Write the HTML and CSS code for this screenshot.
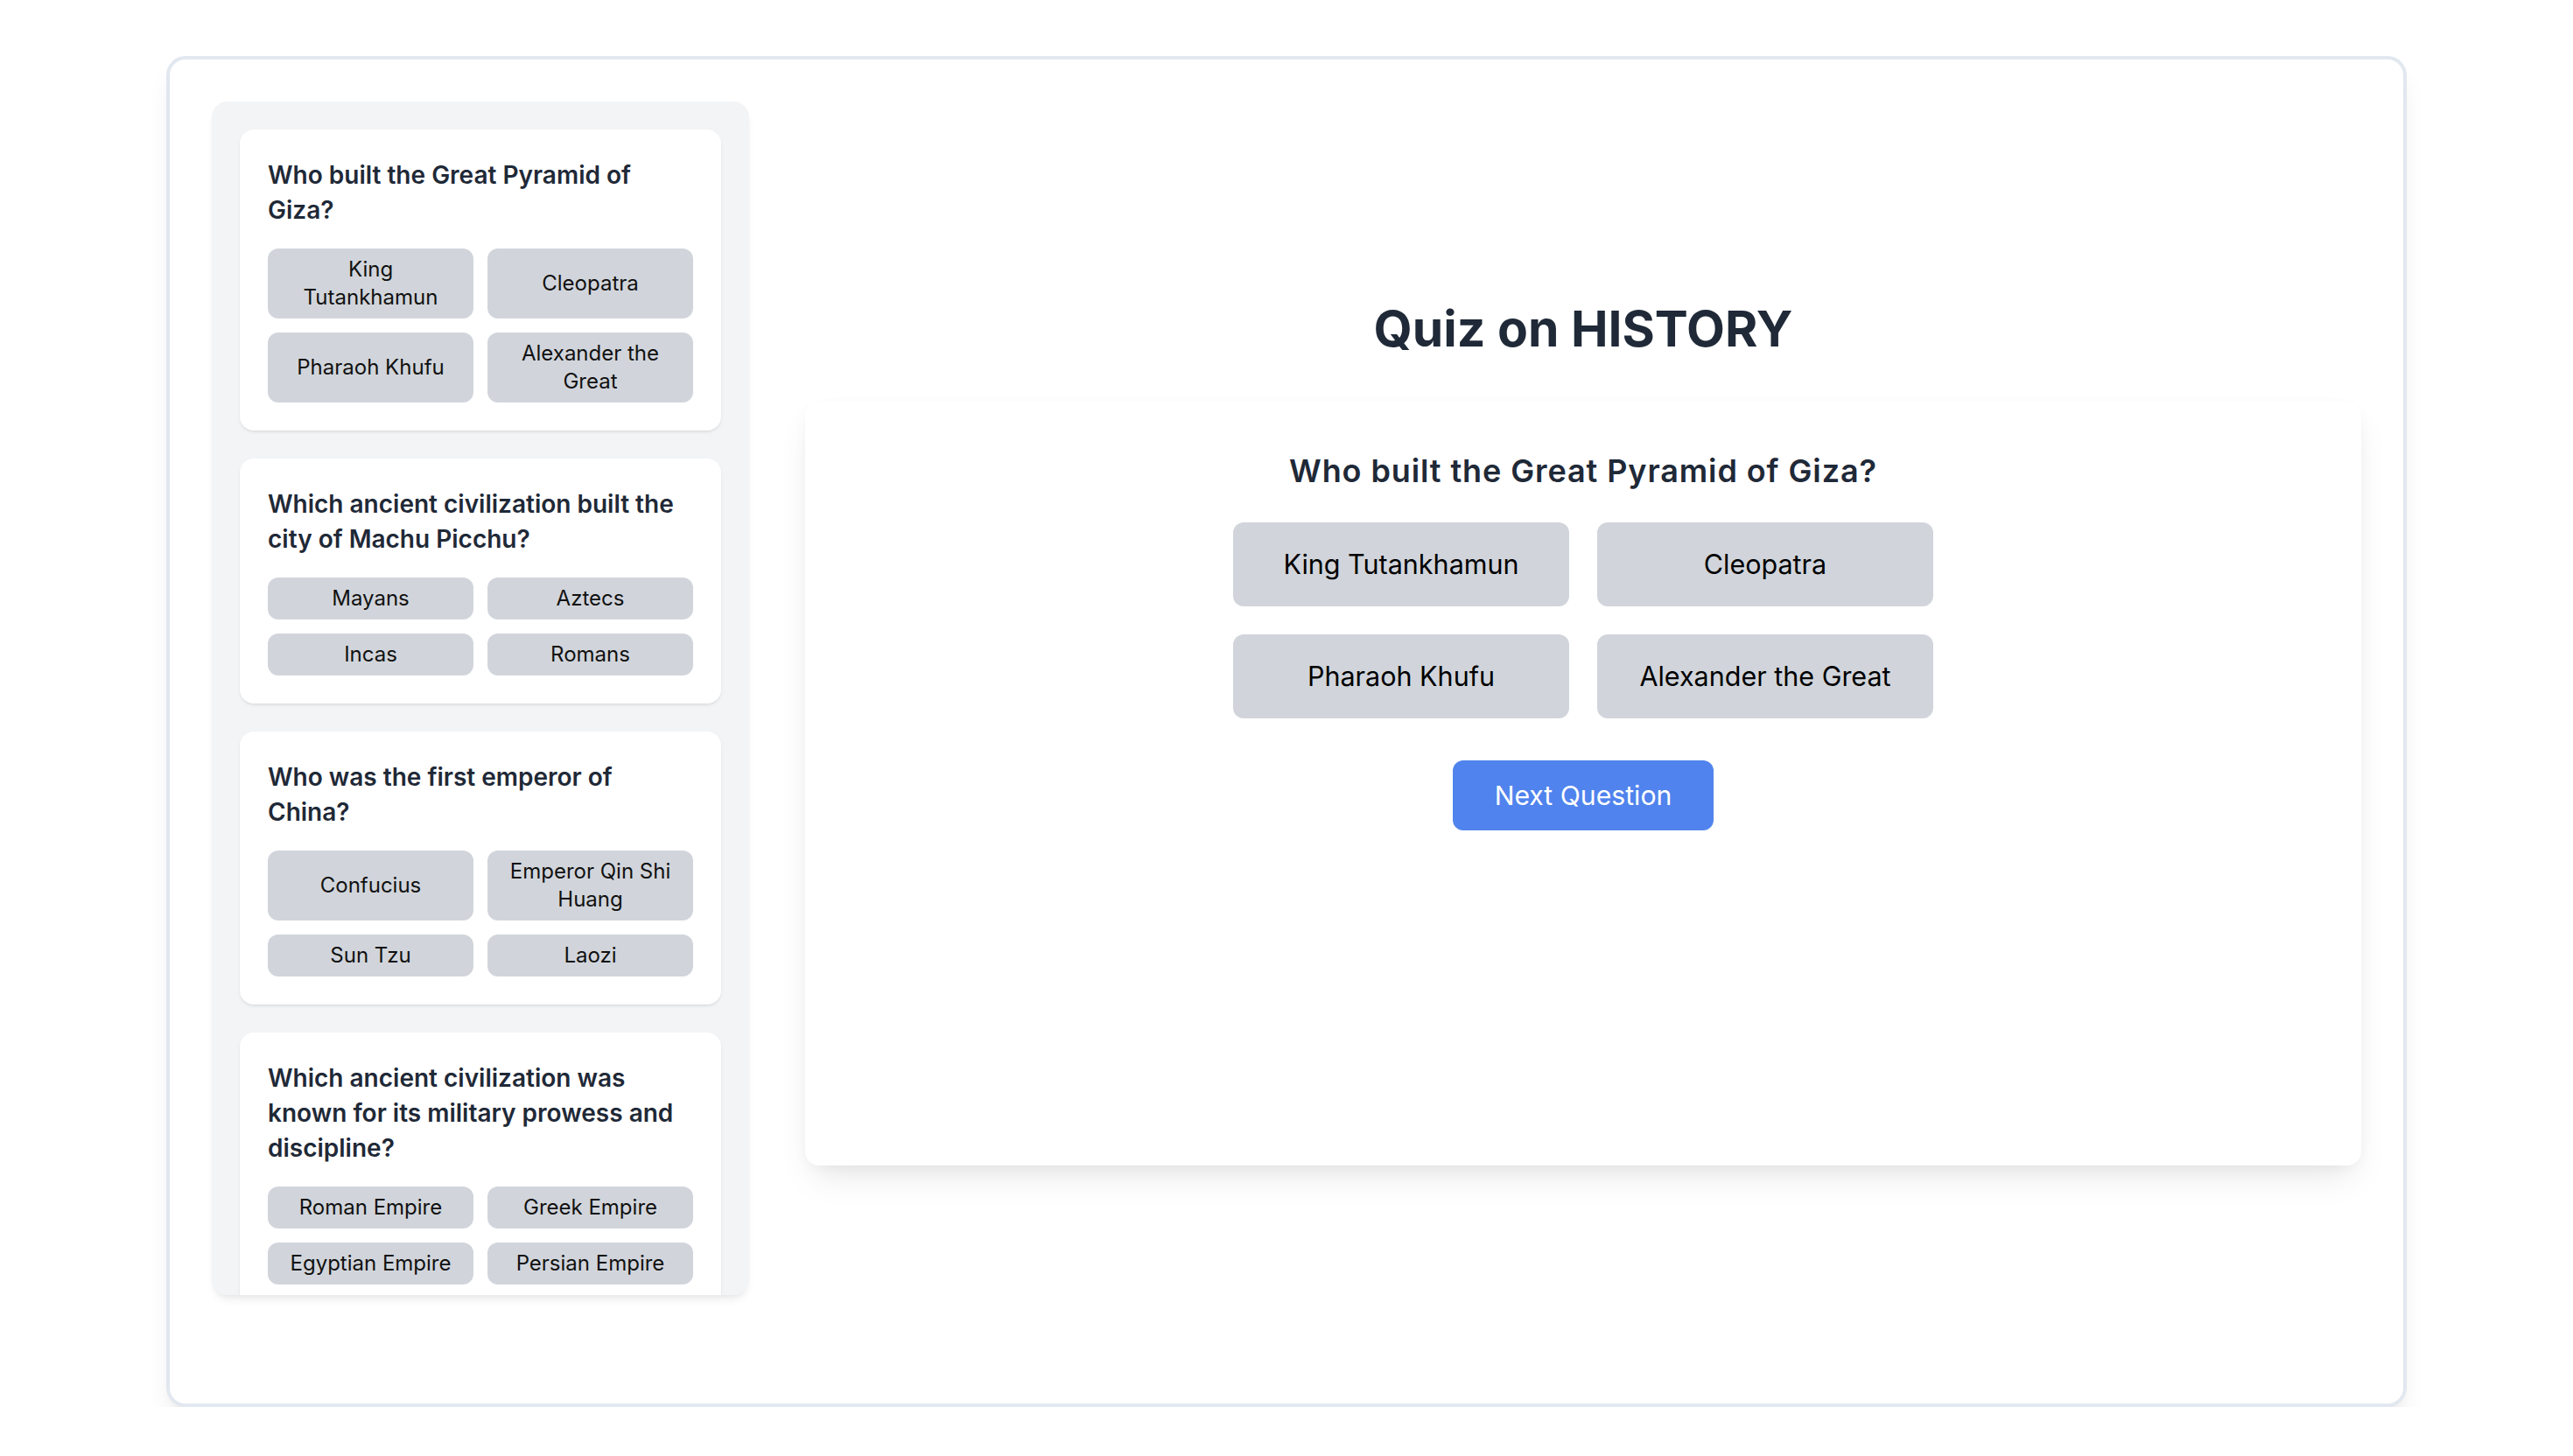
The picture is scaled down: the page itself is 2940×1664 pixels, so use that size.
FILE: index.html
```html
<!DOCTYPE html>
<html lang="en">
<head>
<meta charset="utf-8">
<title>Quiz on HISTORY</title>
<link rel="stylesheet" href="styles.css">
</head>
<body>
<div class="frame">
  <aside class="sidebar">
    <div class="qcard">
      <h3 class="qcard-title">Who built the Great Pyramid of Giza?</h3>
      <div class="qcard-grid">
        <button class="opt">King Tutankhamun</button>
        <button class="opt">Cleopatra</button>
        <button class="opt">Pharaoh Khufu</button>
        <button class="opt">Alexander the Great</button>
      </div>
    </div>
    <div class="qcard">
      <h3 class="qcard-title">Which ancient civilization built the city of Machu Picchu?</h3>
      <div class="qcard-grid">
        <button class="opt">Mayans</button>
        <button class="opt">Aztecs</button>
        <button class="opt">Incas</button>
        <button class="opt">Romans</button>
      </div>
    </div>
    <div class="qcard">
      <h3 class="qcard-title">Who was the first emperor of China?</h3>
      <div class="qcard-grid">
        <button class="opt">Confucius</button>
        <button class="opt">Emperor Qin Shi Huang</button>
        <button class="opt">Sun Tzu</button>
        <button class="opt">Laozi</button>
      </div>
    </div>
    <div class="qcard">
      <h3 class="qcard-title">Which ancient civilization was known for its military prowess and discipline?</h3>
      <div class="qcard-grid">
        <button class="opt">Roman Empire</button>
        <button class="opt">Greek Empire</button>
        <button class="opt">Egyptian Empire</button>
        <button class="opt">Persian Empire</button>
      </div>
    </div>
  </aside>
  <main class="main">
    <h1 class="title">Quiz on HISTORY</h1>
    <section class="panel">
      <h2 class="question">Who built the Great Pyramid of Giza?</h2>
      <div class="answers">
        <button class="answer">King Tutankhamun</button>
        <button class="answer">Cleopatra</button>
        <button class="answer">Pharaoh Khufu</button>
        <button class="answer">Alexander the Great</button>
      </div>
      <button class="next">Next Question</button>
    </section>
  </main>
</div>
</body>
</html>
```

FILE: styles.css
```css
* {
  box-sizing: border-box;
}

html, body {
  margin: 0;
  padding: 0;
  background: #ffffff;
}

body {
  font-family: Inter, "Noto Sans", "Liberation Sans", sans-serif;
  color: #1f2937;
}

button {
  font-family: inherit;
  border: none;
  cursor: pointer;
}

.frame {
  width: 2560px;
  height: 1544px;
  margin: 64px auto 0;
  border: 4px solid #e2e8f0;
  border-radius: 22px;
  padding: 48px;
  display: flex;
  gap: 64px;
  box-shadow: 0 20px 30px -6px rgba(0, 0, 0, 0.08), 0 8px 12px -8px rgba(0, 0, 0, 0.08);
  background: #ffffff;
}

.sidebar {
  flex: none;
  width: 614px;
  height: 1364px;
  background: #f3f4f6;
  border-radius: 18px;
  padding: 32px 32px 0;
  overflow: hidden;
  display: flex;
  flex-direction: column;
  gap: 32px;
  box-shadow: 0 8px 12px -4px rgba(0, 0, 0, 0.08), 0 4px 8px -4px rgba(0, 0, 0, 0.06);
}

.qcard {
  flex: none;
  background: #ffffff;
  border-radius: 16px;
  padding: 32px;
  box-shadow: 0 2px 4px rgba(0, 0, 0, 0.06), 0 2px 3px -1px rgba(0, 0, 0, 0.06);
}

.qcard-title {
  margin: 0 0 24px;
  font-size: 28px;
  line-height: 40px;
  font-weight: 600;
  color: #1f2937;
}

.qcard-grid {
  display: grid;
  grid-template-columns: 1fr 1fr;
  gap: 16px;
}

.opt {
  background: #d1d5db;
  border-radius: 12px;
  padding: 8px 24px;
  font-size: 24px;
  line-height: 32px;
  color: #111111;
  text-align: center;
}

.main {
  flex: 1;
  display: flex;
  flex-direction: column;
  justify-content: center;
}

.title {
  margin: 0 0 46px;
  text-align: center;
  font-size: 57px;
  line-height: 72px;
  font-weight: 700;
  color: #1f2937;
}

.panel {
  height: 874px;
  background: #ffffff;
  border-radius: 16px;
  padding: 52px 48px 48px;
  display: flex;
  flex-direction: column;
  align-items: center;
  box-shadow: 0 20px 40px -10px rgba(0, 0, 0, 0.1), 0 6px 20px -6px rgba(0, 0, 0, 0.06);
}

.question {
  margin: 0 0 31px;
  font-size: 36px;
  line-height: 56px;
  letter-spacing: 0.9px;
  font-weight: 600;
  color: #1f2937;
  text-align: center;
}

.answers {
  display: grid;
  grid-template-columns: 384px 384px;
  gap: 32px;
}

.answer {
  height: 96px;
  background: #d1d5db;
  border-radius: 12px;
  font-size: 30.5px;
  line-height: 48px;
  color: #000000;
  text-align: center;
}

.next {
  margin-top: 48px;
  padding: 16px 48px;
  background: #5083ed;
  color: #ffffff;
  font-size: 30.2px;
  line-height: 48px;
  border-radius: 12px;
}
```
